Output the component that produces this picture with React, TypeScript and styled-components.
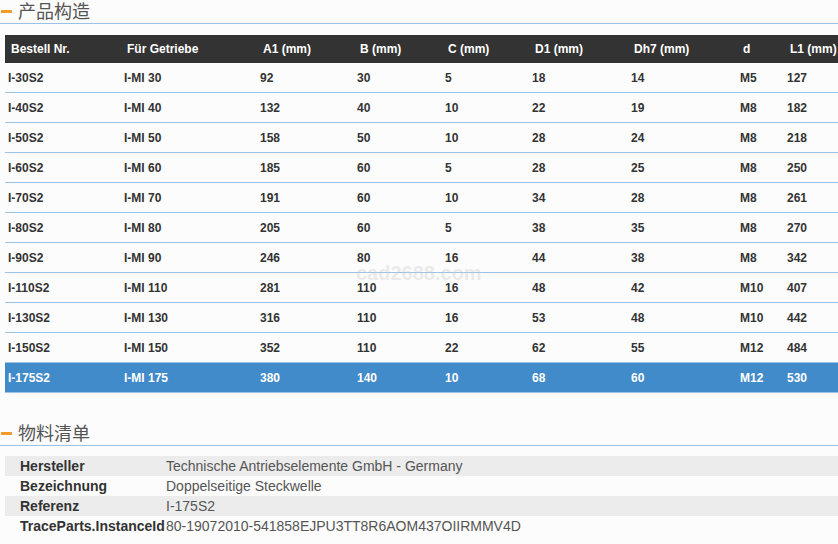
import styled, { createGlobalStyle } from "styled-components";

const GlobalStyle = createGlobalStyle`
  html, body {
    margin: 0;
    padding: 0;
    background: #fcfcfc;
    overflow: hidden;
    font-family: "Liberation Sans", Arial, sans-serif;
  }
`;

const Page = styled.div`
  position: relative;
  width: 838px;
  height: 544px;
  overflow: hidden;
`;

const SectionTitle = styled.div<{ $top: number }>`
  display: flex;
  align-items: center;
  gap: 6px;
  height: 23px;
  margin-top: ${(p) => p.$top}px;
  padding-left: 1px;
  border-bottom: 1px solid #9cc2e6;
  font-family: "Liberation Sans", "Noto Sans CJK SC", sans-serif;
  font-size: 18px;
  line-height: 20px;
  color: #555;
  span.dash {
    width: 11px;
    height: 3px;
    background: #f39c2c;
  }
`;

const Table = styled.table`
  border-collapse: collapse;
  margin: 11px 0 0 5px;
  width: 860px;
  table-layout: fixed;
  font-size: 12px;
  font-weight: bold;
  color: #333;
`;

const Th = styled.th`
  background: #333;
  color: #fff;
  height: 28px;
  padding: 0 0 0 6px;
  text-align: left;
  font-weight: bold;
`;

const Tr = styled.tr<{ $active?: boolean }>`
  background: ${(p) => (p.$active ? "#428bca" : "transparent")};
  color: ${(p) => (p.$active ? "#fff" : "#333")};
  td {
    height: 29px;
    padding: 0 0 0 3px;
    border-bottom: 1px solid #9cc2e6;
  }
`;

const Watermark = styled.div`
  position: absolute;
  left: 356px;
  top: 266px;
  font-size: 20px;
  line-height: 15px;
  font-weight: bold;
  color: rgba(200, 200, 200, 0.35);
  pointer-events: none;
`;

const Info = styled.div`
  margin: 10px 0 0 5px;
  width: 850px;
  font-size: 14px;
`;

const InfoRow = styled.div<{ $shade?: boolean }>`
  display: grid;
  grid-template-columns: 146px 1fr;
  height: 20px;
  align-items: center;
  padding-left: 15px;
  background: ${(p) => (p.$shade ? "#ececec" : "transparent")};
`;

const Label = styled.span`
  font-weight: bold;
  color: #333;
  white-space: nowrap;
`;

const Value = styled.span`
  color: #555;
`;

const widths = [116, 136, 97, 88, 87, 99, 109, 47, 81];
const headers = ["Bestell Nr.", "Für Getriebe", "A1 (mm)", "B (mm)", "C (mm)", "D1 (mm)", "Dh7 (mm)", "d", "L1 (mm)"];

const rows = [
  ["I-30S2", "I-MI 30", "92", "30", "5", "18", "14", "M5", "127"],
  ["I-40S2", "I-MI 40", "132", "40", "10", "22", "19", "M8", "182"],
  ["I-50S2", "I-MI 50", "158", "50", "10", "28", "24", "M8", "218"],
  ["I-60S2", "I-MI 60", "185", "60", "5", "28", "25", "M8", "250"],
  ["I-70S2", "I-MI 70", "191", "60", "10", "34", "28", "M8", "261"],
  ["I-80S2", "I-MI 80", "205", "60", "5", "38", "35", "M8", "270"],
  ["I-90S2", "I-MI 90", "246", "80", "16", "44", "38", "M8", "342"],
  ["I-110S2", "I-MI 110", "281", "110", "16", "48", "42", "M10", "407"],
  ["I-130S2", "I-MI 130", "316", "110", "16", "53", "48", "M10", "442"],
  ["I-150S2", "I-MI 150", "352", "110", "22", "62", "55", "M12", "484"],
  ["I-175S2", "I-MI 175", "380", "140", "10", "68", "60", "M12", "530"],
];

const info = [
  ["Hersteller", "Technische Antriebselemente GmbH - Germany"],
  ["Bezeichnung", "Doppelseitige Steckwelle"],
  ["Referenz", "I-175S2"],
  ["TraceParts.InstanceId", "80-19072010-541858EJPU3TT8R6AOM437OIIRMMV4D"],
];

export default function App() {
  return (
    <Page>
      <GlobalStyle />
      <SectionTitle $top={0}>
        <span className="dash" />
        产品构造
      </SectionTitle>
      <Table>
        <colgroup>
          {widths.map((w, i) => (
            <col key={i} style={{ width: w }} />
          ))}
        </colgroup>
        <thead>
          <tr>
            {headers.map((h) => (
              <Th key={h}>{h}</Th>
            ))}
          </tr>
        </thead>
        <tbody>
          {rows.map((r, i) => (
            <Tr key={r[0]} $active={i === rows.length - 1}>
              {r.map((c, j) => (
                <td key={j}>{c}</td>
              ))}
            </Tr>
          ))}
        </tbody>
      </Table>
      <Watermark>cad2688.com</Watermark>
      <SectionTitle $top={29}>
        <span className="dash" />
        物料清单
      </SectionTitle>
      <Info>
        {info.map(([k, v], i) => (
          <InfoRow key={k} $shade={i % 2 === 0}>
            <Label>{k}</Label>
            <Value>{v}</Value>
          </InfoRow>
        ))}
      </Info>
    </Page>
  );
}
